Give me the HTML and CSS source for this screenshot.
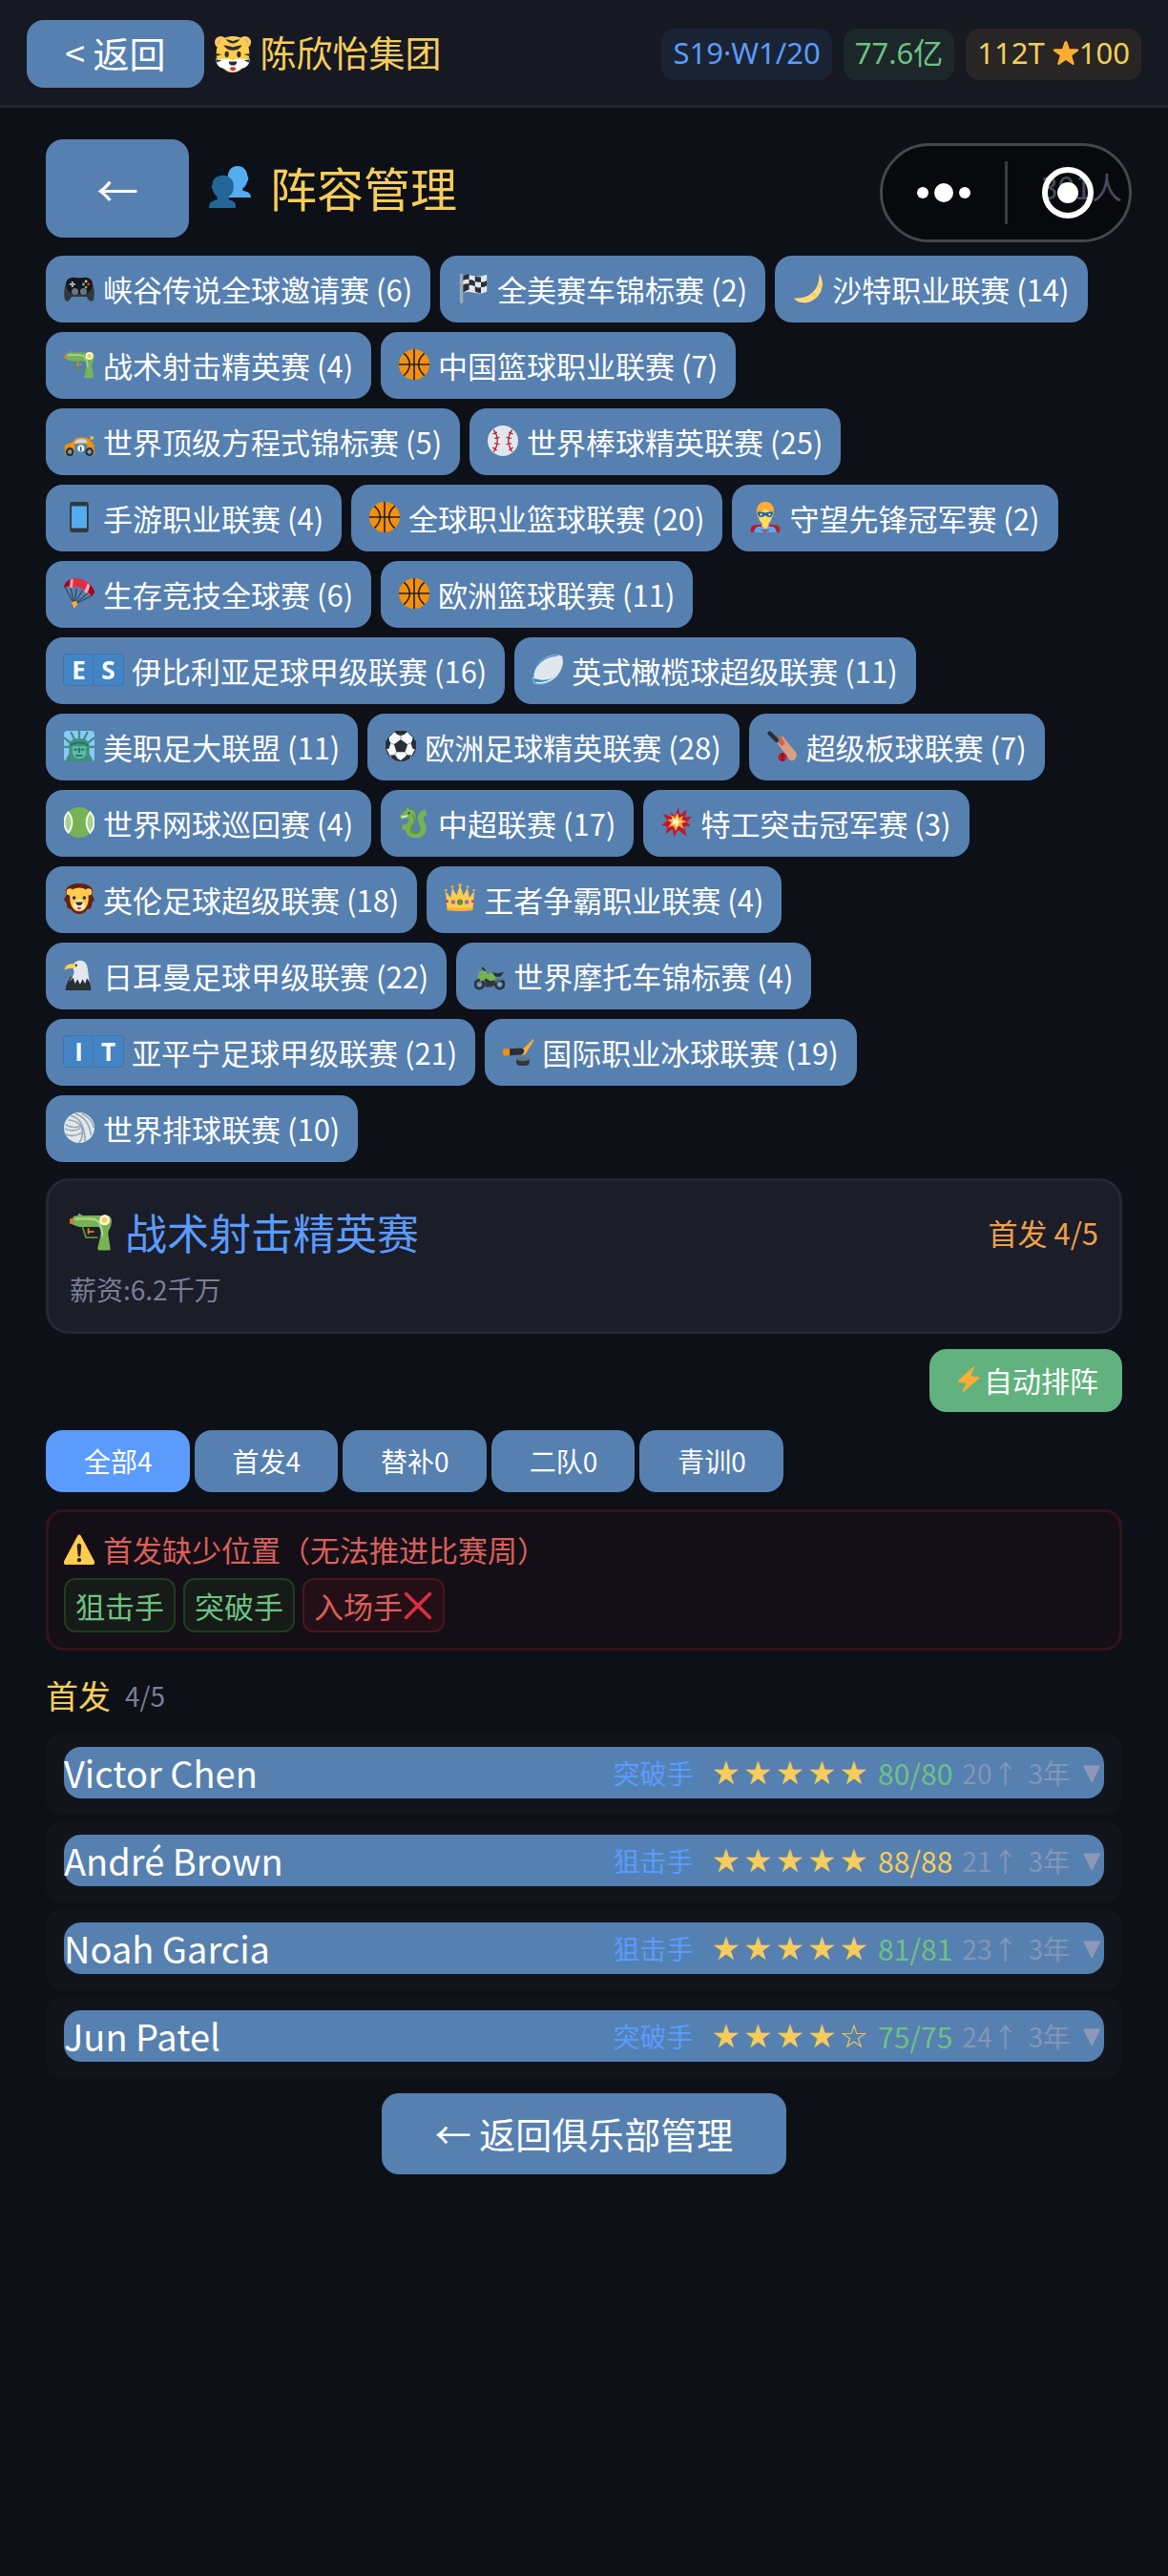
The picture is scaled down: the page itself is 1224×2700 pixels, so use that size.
FILE: index.html
```
<!DOCTYPE html>
<html lang="zh-CN">
<head>
    <meta charset="UTF-8">
    <meta name="viewport" content="width=device-width, initial-scale=1.0">
    <title>阵容管理</title>
    <link rel="stylesheet" href="styles.css">
</head>
<body>
    <svg class="sprite" aria-hidden="true">
        <symbol id="tiger" viewBox="0 0 36 36">
            <circle cx="6" cy="6" r="6" fill="#ffcc4d"/><circle cx="6.5" cy="6.5" r="4" fill="#e6aaaa"/>
            <circle cx="30" cy="6" r="6" fill="#ffcc4d"/><circle cx="29.5" cy="6.5" r="4" fill="#e6aaaa"/>
            <path fill="#ffcc4d" d="M18 0C8 0 2 6 1.500 17c0 3 .5 6 2 8 3 6 8 11 14.500 11S29.500 31 32.500 25c1.500-2 2-5 2-8C34 6 28 0 18 0z"/>
            <path fill="#fff" d="M1 22c4 2 11-1 17 2 6-3 13 0 17-2 0 6-4 10-9 10-3 3-5 3-8 3s-5 0-8-3c-5 0-9-4-9-10z"/>
            <path fill="#292f33" d="M11 3c3 0 5 1 7 2 2-1 4-2 7-2-2 3-5 4-7 4s-5-1-7-4zM9 9c4 0 6 1 9 2 3-1 5-2 9-2-2 4-6 5-9 5s-7-1-9-5zM1 17l6 1-6 2zM35 17l-6 1 6 2zM1 23l6 1-5 2zM35 23l-6 1 5 2zM14 25h8c0 3-2 4-4 4s-4-1-4-4z"/>
            <ellipse cx="12" cy="18" rx="2" ry="3" fill="#292f33"/><ellipse cx="24" cy="18" rx="2" ry="3" fill="#292f33"/>
            <path fill="#dd2e44" d="M15 32c0-2 6-2 6 0 0 3-6 3-6 0z"/>
        </symbol>
        <symbol id="busts" viewBox="0 0 36 36">
            <path fill="#55acee" d="M16 27v-3c0-1 1-2 4-3v-2c-3-2-4-5-4-8 0-7 3-11 8.500-11S33 4 33 9c1 0 1 3 0 4-1 3-2 5-4 6v2c4 1 7 2 7 6H16z"/>
            <path fill="#226699" d="M0 36c0-5 2-6 7-7v-3c-2-1-3-3-4-6-1-1-1-4 0-4 0-5 4-8 9-8 6 0 10 5 9 11 0 3-2 6-4 7v3c5 1 6 2 6 7H0z"/>
        </symbol>
        <symbol id="star" viewBox="0 0 36 36">
            <path fill="#ffac33" d="M18 1c1 0 1 1 2 2l3 9h10c2 0 3 2 1 3l-8 6 3 10c1 2-1 3-2 2l-9-6-9 6c-1 1-3 0-2-2l3-10-8-6c-2-1-1-3 1-3h10l3-9c1-1 1-2 2-2z"/>
        </symbol>
        <symbol id="gamepad" viewBox="0 0 36 36">
            <path fill="#31373d" d="M1 31C-1 24 1 14 4 8h28c3 6 5 16 3 23-1 4-6 3-8-3H9c-2 6-7 7-8 3z"/>
            <path fill="#14171a" d="M3 10c3-5 8-5 12-4h6c4-1 9-1 12 4 1 6-1 13-8 15H11C4 23 2 16 3 10z"/>
            <circle cx="13" cy="22" r="4" fill="#66757f"/><circle cx="23" cy="22" r="4" fill="#66757f"/>
            <path stroke="#99aab5" stroke-width="2.5" d="M10 10v7M6.500 13.500h7"/>
            <circle cx="26" cy="10" r="1.6" fill="#ffcc4d"/><circle cx="29" cy="13.5" r="1.6" fill="#dd2e44"/><circle cx="23" cy="13.5" r="1.6" fill="#55acee"/><circle cx="26" cy="17" r="1.6" fill="#77b255"/>
        </symbol>
        <symbol id="flag" viewBox="0 0 36 36">
            <path fill="#99aab5" d="M2 3c0-3 4-3 4 0v31c0 3-4 3-4 0z"/>
            <path fill="#e1e8ed" d="M6 4c8-5 14 4 28-2v20c-12 6-19-3-28 2z"/>
            <path fill="#292f33" d="M6 4q4-3 7-2v6q-3-1-7 1zM20 4q3 1 7 1v6q-4 0-7-1zM13 8q4 0 7 2v6q-3-2-7-2zM27 11q4 0 7-2v6q-3 2-7 2zM6 14q4-2 7-1v7q-3 0-7 4zM20 16q4 2 7 1v7q-4 0-7-2z"/>
        </symbol>
        <symbol id="moon" viewBox="0 0 36 36">
            <path fill="#ffd983" d="M31 1c7 10 4 24-7 31-8 5-18 4-23-2 11 0 18-2 23-8 5-5 7-12 7-21z"/>
            <circle cx="25" cy="26" r="2.5" fill="#ffcc4d"/><circle cx="32" cy="16" r="1.7" fill="#ffcc4d"/><circle cx="16" cy="31" r="1.5" fill="#ffcc4d"/>
        </symbol>
        <symbol id="pistol" viewBox="0 0 36 36">
            <path fill="none" stroke="#5c913b" stroke-width="1.5" d="M11 14l3 9h10"/>
            <path fill="none" stroke="#f4900c" stroke-width="1.3" d="M16 15v5M16 18h5"/>
            <path fill="#e0702c" d="M0 7l4-1v6l-4-1z"/>
            <path fill="#77b255" d="M3 5l4-1 1-2 3 2h17c5-1 8 1 8 5 0 5-3 7-3 11l2 13c0 1-1 1-2 1h-7c-1 0-2 0-2-2l3-13c0-3-1-5-3-5H8l-5-2z"/>
            <path fill="none" stroke="#a6d388" stroke-width="2" stroke-linecap="round" d="M5 7h12c7 0 10 2 11 14"/>
            <circle cx="30" cy="8" r="4.5" fill="#fff8e8"/><circle cx="30" cy="8" r="2.5" fill="#ffcc4d"/>
        </symbol>
        <symbol id="basketball" viewBox="0 0 36 36">
            <circle cx="18" cy="18" r="18" fill="#f4900c"/>
            <path fill="none" stroke="#231f20" stroke-width="1.8" d="M18 0v36M0 18h36M6 5c9 8 9 18 0 26M30 5c-9 8-9 18 0 26"/>
        </symbol>
        <symbol id="racecar" viewBox="0 0 36 36">
            <path fill="#ffac33" d="M31 12l4 1v3l-4 1z"/>
            <path fill="#f4900c" d="M1 34V24c1-2 6-3 9-4 3-5 5-6 9-6h5c4 0 6 2 8 5 3 1 4 5 4 15z"/>
            <path fill="#bbddf5" d="M12 21c2-4 4-5 8-5h3c2 0 4 2 5 4z"/>
            <path fill="#3b88c3" d="M13 22h14v12H13z"/>
            <circle cx="20" cy="27" r="4" fill="#fff"/><path stroke="#292f33" stroke-width="1.5" d="M20 25v5"/>
            <circle cx="7" cy="31" r="5" fill="#292f33"/><circle cx="30" cy="31" r="5" fill="#292f33"/>
            <circle cx="7" cy="31" r="2.5" fill="#8899a6"/><circle cx="30" cy="31" r="2.5" fill="#8899a6"/>
        </symbol>
        <symbol id="baseball" viewBox="0 0 36 36">
            <circle cx="18" cy="18" r="18" fill="#e1e8ed"/>
            <path fill="none" stroke="#be1931" stroke-width="1.5" d="M7 5c6 8 6 18 0 26M29 5c-6 8-6 18 0 26M6 10l5-2M8 15l6-1M8 21l6 1M6 26l5 3M30 10l-5-2M28 15l-6-1M28 21l-6 1M30 26l-5 3"/>
        </symbol>
        <symbol id="phone" viewBox="0 0 36 36">
            <rect x="7" y="0" width="22" height="36" rx="3" fill="#31373d"/>
            <rect x="9" y="5" width="18" height="26" fill="#55acee"/>
        </symbol>
        <symbol id="hero" viewBox="0 0 36 36">
            <path fill="#be1931" d="M1 36v-4c0-4 3-5 8-5h18c5 0 8 1 8 5v4z"/>
            <path fill="#55acee" d="M5 36c0-5 3-7 8-7h10c5 0 8 2 8 7z"/>
            <path fill="#dd2e44" d="M12 33h12l-6 3z"/>
            <path fill="#ffac33" d="M9 18C6 8 9 0 18 0s12 8 9 18z"/>
            <path fill="#ffdc5d" d="M10 13c4-1 6-3 8-5 3 3 6 4 8 4 0 8-1 11-4 13v4l-4 3-4-3v-4c-3-2-4-5-4-12z"/>
            <path fill="#226699" d="M9 12c3-1 6 0 9 1 3-1 6-2 9-1 0 5-2 6-5 6-2 0-3-2-4-2s-2 2-4 2c-3 0-5-1-5-6z"/>
            <circle cx="13" cy="15" r="1.3" fill="#dff"/><circle cx="23" cy="15" r="1.3" fill="#dff"/>
        </symbol>
        <symbol id="parachute" viewBox="0 0 36 36">
            <path fill="none" stroke="#292f33" stroke-width="1" d="M1 10l11 21M8 12l4 19M15 12l-3 19M22 14L12 31M28 18L12 31M34 20L12 31"/>
            <path fill="#dd2e44" d="M0 11C2 3 8 0 15 0c11 1 20 9 21 17 0 2-1 3-3 4-1-3-3-4-6-3-1-4-3-6-7-5-2-3-5-4-9-2-3-2-7-1-11 0z"/>
            <path fill="#f4abba" d="M8 2l3-1-1 10H7zM28 6l3 3-4 9-3-2z"/><path fill="#a0041e" d="M0 11c1-5 3-8 7-9L6 9zM31 8c3 3 5 6 5 9l-3 4-4-4z"/>
            <path fill="#ffac33" d="M9 28l6-1 1 4-4 5z"/>
        </symbol>
        <symbol id="rugby" viewBox="0 0 36 36">
            <path fill="#e1e8ed" d="M35 2c3 10-2 22-10 28-7 6-19 7-23 4C-2 27 2 14 9 8 17 1 29-2 35 2z"/>
            <path fill="#3b88c3" d="M35 12c-2 12-14 21-30 17-2 0-4-1-4-2 0 9 5 10 15 8 10-3 18-12 19-23z"/>
            <path fill="none" stroke="#e1e8ed" stroke-width="2" d="M4 33c12 3 25-5 29-17"/>
            <path fill="none" stroke="#3b88c3" stroke-width="1.5" d="M1 27C0 13 14 2 30 1"/>
        </symbol>
        <symbol id="liberty" viewBox="0 0 36 36">
            <rect width="36" height="36" rx="4" fill="#88c9f9"/>
            <path stroke="#3f8f7c" stroke-width="2.5" d="M18 0v12M8 1l6 12M28 1l-6 12M0 8l11 9M36 8l-11 9M0 19h9M36 19h-9"/>
            <path fill="#3f8f7c" d="M2 36c1-6 4-7 4-10v-8c0-6 5-9 12-9s12 3 12 9v8c0 3 3 4 4 10z"/>
            <path fill="#5dbba6" d="M10 18h16v8c0 4-4 7-8 7s-8-3-8-7z"/>
            <path fill="none" stroke="#2c6b60" stroke-width="2" d="M8 17c5-4 15-4 20 0M12 22h4M20 22h4M18 20v6M14 29h8"/>
        </symbol>
        <symbol id="soccer" viewBox="0 0 36 36">
            <circle cx="18" cy="18" r="18" fill="#292f33"/>
            <path fill="#f5f8fa" d="M18 3l8-1 6 6-1 8 4 5-5 10-9 1-3 3-5-3-7-1-5-10 4-5-1-8 6-6z"/>
            <path fill="#292f33" d="M18 10l8 6-3 9H13l-3-9zM11 0h14l-2 4-5 2-5-2zM0 12l4-2 2 5-2 6-4 1zM36 12l-4-2-2 5 2 6 4 1zM5 29l6-1 3 4-2 3zM31 29l-6-1-3 4 2 3z"/>
            <path stroke="#8899a6" stroke-width="1" d="M18 5v5M6 14l4 2M30 14l-4 2M13 25l-3 4M23 25l3 4"/>
        </symbol>
        <symbol id="cricket" viewBox="0 0 36 36">
            <path fill="#d99e82" d="M13 11l5-5 16 20c3 4-3 11-7 9L12 15z"/>
            <path fill="#c1694f" d="M10 12l6-6 5 8-3 4z"/>
            <path stroke="#292f33" stroke-width="5" stroke-linecap="round" d="M3 3l8 8"/>
            <circle cx="18" cy="31" r="5" fill="#be1931"/><path stroke="#7c0012" stroke-width="1.2" d="M18 26v10"/>
        </symbol>
        <symbol id="tennis" viewBox="0 0 36 36">
            <circle cx="18" cy="18" r="18" fill="#77b255"/>
            <path fill="#a6d388" stroke="#fff" stroke-width="2" d="M5 6c6 7 6 17 0 24-6-6-6-18 0-24zM31 6c-6 7-6 17 0 24 6-6 6-18 0-24z"/>
        </symbol>
        <symbol id="dragon" viewBox="0 0 36 36">
            <path fill="none" stroke="#77b255" stroke-width="7" stroke-linejoin="round" d="M14 8c6 5-1 11-3 17-1 10 18 11 18 0 0-6-5-9-3-14 1-3 2-4 6-5"/>
            <path fill="#77b255" d="M1 10l7-6 2-4 3 3 5 1 2 8-6 4-4-3-7 2zM3 21l7-1 3 4-8 3z"/>
            <path fill="none" stroke="#5c913b" stroke-width="1.8" d="M16 9c7 7-1 12-2 18 2 6 11 4 11-2M7 4l1-3M14 3l2-3M18 6l4-2M4 22l-3 2"/>
            <path stroke="#fff" stroke-width="1.5" d="M3 12l7-2"/><circle cx="12" cy="7" r="1.2" fill="#292f33"/>
        </symbol>
        <symbol id="boom" viewBox="0 0 36 36">
            <path fill="#be1931" d="M20 0l2 9 8-6-2 9 8-1-6 7 5 4-8 1 3 12-10-8-5 8-2-9-8 6 2-9-7-2 7-5-5-8 9 3 1-5 4 5z"/>
            <path fill="#ffac33" d="M19 7l2 6 5-3-2 5 6 2-6 2 3 7-7-4-3 6-3-6-6 2 4-6-5-3 6-1-2-5 5 3z"/>
            <path fill="#fff3cf" d="M19 11l1 5 4 1-4 2-1 5-3-4-4 1 2-4-1-4 4 2z"/>
        </symbol>
        <symbol id="lion" viewBox="0 0 36 36">
            <path fill="#662113" d="M18 0C9 0 4 3 2 8l1 5-3 6 3 4 1 6 5 2c2 4 6 5 9 5s7-1 9-5l5-2 1-6 3-4-3-6 1-5C32 3 27 0 18 0z"/>
            <circle cx="7" cy="10" r="4" fill="#ffcc4d"/><circle cx="29" cy="10" r="4" fill="#ffcc4d"/>
            <path fill="#ffcc4d" d="M18 5c-8 0-11 4-11 12 0 9 4 16 11 16s11-7 11-16c0-8-3-12-11-12z"/>
            <path fill="#ffe8b6" d="M18 18c3 3 8 5 7 9-2 4-5 5-7 5s-5-1-7-5c-1-4 4-6 7-9z"/>
            <path fill="#292f33" d="M14 22h8c0 3-2 4-4 4s-4-1-4-4z"/><circle cx="12" cy="17" r="2" fill="#292f33"/><circle cx="24" cy="17" r="2" fill="#292f33"/><path fill="#dd2e44" d="M16 28h4v2l-2 1-2-1z"/>
        </symbol>
        <symbol id="crown" viewBox="0 0 36 36">
            <path fill="#ffcc4d" d="M3 31L1 9l6 8 2-12 5 9 4-12 4 12 5-9 2 12 6-8-2 22c-9 2-21 2-30 0z"/>
            <g fill="#ffac33"><circle cx="1.5" cy="8" r="1.5"/><circle cx="9" cy="4" r="1.5"/><circle cx="18" cy="2" r="2"/><circle cx="27" cy="4" r="1.5"/><circle cx="34.5" cy="8" r="1.5"/><path d="M3 29h30v3H3z"/></g>
            <circle cx="18" cy="22" r="3.5" fill="#5c913b"/><circle cx="10" cy="22" r="2.5" fill="#9266cc"/><circle cx="26" cy="22" r="2.5" fill="#9266cc"/><circle cx="3" cy="21" r="1.5" fill="#dd2e44"/><circle cx="33" cy="21" r="1.5" fill="#dd2e44"/>
        </symbol>
        <symbol id="eagle" viewBox="0 0 36 36">
            <path fill="#292f33" d="M2 36c0-7 3-11 6-16h18c4 5 6 10 6 16z"/>
            <path fill="#e1e8ed" d="M10 7c3-6 10-8 15-4 4 4 3 12 5 22l-3-3-2 6-3-5-3 6-3-6-3 5-2-7-5 5c3-5 6-8 6-12z"/>
            <path fill="#ffcc4d" d="M13 5C6 4 1 6 1 12c3-2 6-2 9-2 3 1 5-1 5-4z"/><circle cx="14.5" cy="6.5" r="1.3" fill="#292f33"/>
        </symbol>
        <symbol id="motorcycle" viewBox="0 0 36 36">
            <g fill="none" stroke="#292f33" stroke-width="3"><circle cx="6" cy="29" r="5"/><circle cx="30" cy="29" r="5"/></g>
            <circle cx="6" cy="29" r="2" fill="#99aab5"/><circle cx="30" cy="29" r="2" fill="#99aab5"/>
            <path stroke="#66757f" stroke-width="2" d="M6 29l6-16M15 29l20-7"/>
            <path fill="#31373d" d="M12 20h11l2 9-5 3h-7z"/>
            <path fill="#77b255" d="M6 14l6-2 4 5 5-2 6 4-3 5-5 1-5-3-5 3-5-4z"/><path fill="#292f33" d="M21 15l7 1 7-2-4 6h-6z"/><path stroke="#292f33" stroke-width="2" d="M9 9l4 4"/>
        </symbol>
        <symbol id="hockey" viewBox="0 0 36 36">
            <path fill="#ffac33" d="M36 3c1 0 1 2 0 3l-8 13c-1 2-3 3-6 3l-2-6c2 0 4-1 5-2z"/>
            <path fill="#292f33" d="M7 15l14-1 4 2c0 3-1 6-5 6L7 23z"/>
            <path fill="#f4900c" d="M2 15h6v8H2c-3-1-3-7 0-8z"/>
            <path fill="#31373d" d="M16 27v5c0 4 15 4 15 0v-5z"/><ellipse cx="23.5" cy="27" rx="7.5" ry="2.5" fill="#66757f"/>
        </symbol>
        <symbol id="volleyball" viewBox="0 0 36 36">
            <circle cx="18" cy="18" r="18" fill="#e1e8ed"/>
            <path fill="none" stroke="#99a5b0" stroke-width="1.8" d="M13 1c9 3 17 10 19 26M8 4c9 2 16 8 17 30M5 9c6 0 12 3 15 7M1 19c6 3 12 3 18 0M2 26c8 3 14 1 19-2M20 16c-7 3-15 1-18-2M20 16c3 7 2 14-2 20M21 1c8 4 13 10 14 17"/>
        </symbol>
        <symbol id="bolt" viewBox="-3 0 42 36">
            <path fill="#ffac33" d="M26 1c1-2-1-1-2 0L4 19c-1 1-1 3 1 3l10 1L9 35c0 1 1 1 2 0l21-18c1-1 1-3-1-3l-10-1z"/>
        </symbol>
        <symbol id="warning" viewBox="0 0 36 36">
            <path fill="#ffcc4d" d="M2 36c-2 0-3-2-2-4L16 2c1-2 3-2 4 0l16 30c1 2 0 4-2 4z"/>
            <path fill="#231f20" d="M15.500 14c0-4 5-4 5 0l-1 11c0 2-3 2-3 0z"/><circle cx="18" cy="30.5" r="2.5" fill="#231f20"/>
        </symbol>
        <symbol id="cross" viewBox="0 0 36 36">
            <path stroke="#dd2e44" stroke-width="4" stroke-linecap="round" d="M4 4l28 28M32 4L4 32"/>
        </symbol>
    </svg>

    <header class="topbar">
        <div class="brand">
            <button class="btn btn-back">&lt; 返回</button>
            <svg class="emoji emoji-lg"><use href="#tiger"/></svg>
            <span class="company">陈欣怡集团</span>
        </div>
        <div class="stats">
            <span class="stat blue">S19·W1/20</span>
            <span class="stat green">77.6亿</span>
            <span class="stat gold">112T <svg class="emoji emoji-sm"><use href="#star"/></svg>100</span>
        </div>
    </header>

    <div class="capsule">
        <button class="capsule-btn" aria-label="更多">
            <svg width="60" height="24" viewBox="0 0 60 24"><g fill="#fff"><circle cx="8" cy="12" r="6"/><circle cx="30" cy="12" r="10"/><circle cx="52" cy="12" r="6"/></g></svg>
        </button>
        <button class="capsule-btn" aria-label="关闭">
            <svg width="56" height="56" viewBox="0 0 56 56"><circle cx="28" cy="28" r="24" fill="none" stroke="#fff" stroke-width="6"/><circle cx="28" cy="28" r="11" fill="#fff"/></svg>
        </button>
    </div>

    <main class="page">
        <div class="page-head">
            <button class="btn btn-arrow">←</button>
            <h1><svg class="emoji emoji-xl"><use href="#busts"/></svg>阵容管理</h1>
            <span class="total">301人</span>
        </div>

        <div class="leagues">
            <button class="btn chip"><svg class="emoji"><use href="#gamepad"/></svg>峡谷传说全球邀请赛 (6)</button>
            <button class="btn chip"><svg class="emoji"><use href="#flag"/></svg>全美赛车锦标赛 (2)</button>
            <button class="btn chip"><svg class="emoji"><use href="#moon"/></svg>沙特职业联赛 (14)</button>
            <button class="btn chip"><svg class="emoji"><use href="#pistol"/></svg>战术射击精英赛 (4)</button>
            <button class="btn chip"><svg class="emoji"><use href="#basketball"/></svg>中国篮球职业联赛 (7)</button>
            <button class="btn chip"><svg class="emoji"><use href="#racecar"/></svg>世界顶级方程式锦标赛 (5)</button>
            <button class="btn chip"><svg class="emoji"><use href="#baseball"/></svg>世界棒球精英联赛 (25)</button>
            <button class="btn chip"><svg class="emoji"><use href="#phone"/></svg>手游职业联赛 (4)</button>
            <button class="btn chip"><svg class="emoji"><use href="#basketball"/></svg>全球职业篮球联赛 (20)</button>
            <button class="btn chip"><svg class="emoji"><use href="#hero"/></svg>守望先锋冠军赛 (2)</button>
            <button class="btn chip"><svg class="emoji"><use href="#parachute"/></svg>生存竞技全球赛 (6)</button>
            <button class="btn chip"><svg class="emoji"><use href="#basketball"/></svg>欧洲篮球联赛 (11)</button>
            <button class="btn chip"><span class="region"><b>E</b><b>S</b></span>伊比利亚足球甲级联赛 (16)</button>
            <button class="btn chip"><svg class="emoji"><use href="#rugby"/></svg>英式橄榄球超级联赛 (11)</button>
            <button class="btn chip"><svg class="emoji"><use href="#liberty"/></svg>美职足大联盟 (11)</button>
            <button class="btn chip"><svg class="emoji"><use href="#soccer"/></svg>欧洲足球精英联赛 (28)</button>
            <button class="btn chip"><svg class="emoji"><use href="#cricket"/></svg>超级板球联赛 (7)</button>
            <button class="btn chip"><svg class="emoji"><use href="#tennis"/></svg>世界网球巡回赛 (4)</button>
            <button class="btn chip"><svg class="emoji"><use href="#dragon"/></svg>中超联赛 (17)</button>
            <button class="btn chip"><svg class="emoji"><use href="#boom"/></svg>特工突击冠军赛 (3)</button>
            <button class="btn chip"><svg class="emoji"><use href="#lion"/></svg>英伦足球超级联赛 (18)</button>
            <button class="btn chip"><svg class="emoji"><use href="#crown"/></svg>王者争霸职业联赛 (4)</button>
            <button class="btn chip"><svg class="emoji"><use href="#eagle"/></svg>日耳曼足球甲级联赛 (22)</button>
            <button class="btn chip"><svg class="emoji"><use href="#motorcycle"/></svg>世界摩托车锦标赛 (4)</button>
            <button class="btn chip"><span class="region"><b>I</b><b>T</b></span>亚平宁足球甲级联赛 (21)</button>
            <button class="btn chip"><svg class="emoji"><use href="#hockey"/></svg>国际职业冰球联赛 (19)</button>
            <button class="btn chip"><svg class="emoji"><use href="#volleyball"/></svg>世界排球联赛 (10)</button>
        </div>

        <section class="card">
            <div class="card-head">
                <h2><svg class="emoji emoji-xl"><use href="#pistol"/></svg>战术射击精英赛</h2>
                <span class="lineup">首发 4/5</span>
            </div>
            <p class="salary">薪资:6.2千万</p>
        </section>

        <div class="actions">
            <button class="btn btn-auto"><svg class="emoji"><use href="#bolt"/></svg>自动排阵</button>
        </div>

        <div class="tabs">
            <button class="btn tab active">全部4</button>
            <button class="btn tab">首发4</button>
            <button class="btn tab">替补0</button>
            <button class="btn tab">二队0</button>
            <button class="btn tab">青训0</button>
        </div>

        <section class="alert">
            <p class="alert-title"><svg class="emoji"><use href="#warning"/></svg>首发缺少位置（无法推进比赛周）</p>
            <div class="slots">
                <span class="slot ok">狙击手</span>
                <span class="slot ok">突破手</span>
                <span class="slot missing">入场手<svg class="emoji"><use href="#cross"/></svg></span>
            </div>
        </section>

        <h3 class="group">首发 <small>4/5</small></h3>

        <div class="players">
            <div class="player">
                <button class="btn player-btn">
                    <span class="name">Victor Chen</span>
                    <span class="pos">突破手</span>
                    <span class="stars"><i>★</i><i>★</i><i>★</i><i>★</i><i>★</i></span>
                    <span class="rating">80/80</span>
                    <span class="meta">20↑</span>
                    <span class="meta">3年</span>
                    <span class="caret">▼</span>
                </button>
            </div>
            <div class="player">
                <button class="btn player-btn">
                    <span class="name">André Brown</span>
                    <span class="pos">狙击手</span>
                    <span class="stars"><i>★</i><i>★</i><i>★</i><i>★</i><i>★</i></span>
                    <span class="rating top">88/88</span>
                    <span class="meta">21↑</span>
                    <span class="meta">3年</span>
                    <span class="caret">▼</span>
                </button>
            </div>
            <div class="player">
                <button class="btn player-btn">
                    <span class="name">Noah Garcia</span>
                    <span class="pos">狙击手</span>
                    <span class="stars"><i>★</i><i>★</i><i>★</i><i>★</i><i>★</i></span>
                    <span class="rating">81/81</span>
                    <span class="meta">23↑</span>
                    <span class="meta">3年</span>
                    <span class="caret">▼</span>
                </button>
            </div>
            <div class="player">
                <button class="btn player-btn">
                    <span class="name">Jun Patel</span>
                    <span class="pos">突破手</span>
                    <span class="stars"><i>★</i><i>★</i><i>★</i><i>★</i><i>☆</i></span>
                    <span class="rating">75/75</span>
                    <span class="meta">24↑</span>
                    <span class="meta">3年</span>
                    <span class="caret">▼</span>
                </button>
            </div>
        </div>

        <div class="footer">
            <button class="btn btn-club">← 返回俱乐部管理</button>
        </div>
    </main>
</body>
</html>
```
FILE: styles.css
```
* {
    box-sizing: border-box;
}
body {
    margin: 0;
    min-height: 100vh;
    background: #0d1017;
    color: #fff;
    font-family: "Noto Sans CJK SC", sans-serif;
    font-size: 31px;
}
h1, h2, h3, p {
    margin: 0;
    font-weight: 400;
}
.sprite {
    position: absolute;
    width: 0;
    height: 0;
}
.emoji {
    width: 32px;
    height: 32px;
    flex-shrink: 0;
}
.emoji-sm {
    width: 28px;
}
.emoji-lg {
    width: 38px;
    height: 38px;
}
.emoji-xl {
    width: 44px;
    height: 44px;
}
.btn {
    display: flex;
    align-items: center;
    justify-content: center;
    margin: 0;
    padding: 0;
    border: none;
    border-radius: 18px;
    background: #5680b0;
    color: #fff;
    font-family: inherit;
    font-size: 31px;
    line-height: 1;
    white-space: nowrap;
    cursor: pointer;
}

/* top bar */
.topbar {
    display: flex;
    align-items: center;
    justify-content: space-between;
    padding: 21px 28px 18px;
    background: #161822;
    border-bottom: 3px solid #222535;
}
.brand {
    display: flex;
    align-items: center;
}
.btn-back {
    height: 71px;
    padding: 0 40px 4px;
    margin-right: 11px;
    font-size: 38px;
}
.company {
    margin-left: 10px;
    padding-bottom: 6px;
    color: #f5cd5b;
    font-size: 38px;
    line-height: 1;
}
.stats {
    display: flex;
    gap: 12px;
}
.stat {
    display: flex;
    align-items: center;
    height: 54px;
    padding: 0 12px 2px;
    border-radius: 14px;
    font-family: "Noto Sans", "Noto Sans CJK SC", sans-serif;
    font-size: 31px;
    line-height: 1;
    white-space: pre;
}
.blue {
    color: #5a9bfc;
    background: #192334;
}
.green {
    color: #6dc283;
    background: #1c2729;
}
.gold {
    color: #f5cd5b;
    background: #272624;
}

/* mini program capsule, floats over the page */
.capsule {
    position: absolute;
    top: 150px;
    right: 38px;
    display: flex;
    align-items: center;
    width: 264px;
    height: 104px;
    border: 3px solid #464749;
    border-radius: 52px;
    background: rgba(0, 0, 0, 0.4);
}
.capsule-btn {
    display: flex;
    flex: 1;
    align-items: center;
    justify-content: center;
    height: 66px;
    padding: 0;
    border: none;
    background: none;
}
.capsule-btn + .capsule-btn {
    border-left: 3px solid #3a3b3e;
}

.page {
    padding: 33px 48px 48px;
}
.page-head {
    display: flex;
    align-items: center;
    margin-bottom: 19px;
}
.btn-arrow {
    width: 150px;
    height: 103px;
    font-size: 44px;
}
h1 {
    display: flex;
    align-items: center;
    gap: 20px;
    margin-left: 21px;
    padding-bottom: 4px;
    color: #f5cd5b;
    font-size: 49px;
    line-height: 1;
}
.total {
    margin-left: auto;
    padding-bottom: 6px;
    color: #7b7e96;
    font-size: 32px;
    line-height: 1;
}

/* league filter */
.leagues {
    display: flex;
    flex-wrap: wrap;
    gap: 10px;
    margin-bottom: 17px;
}
.chip {
    gap: 9px;
    height: 70px;
    padding: 0 19px 2px;
}
.region {
    display: flex;
}
.region b {
    width: 31px;
    height: 32px;
    border-radius: 3px;
    background: #4384c4;
    box-shadow: 0 0 0 1px #3f74ad;
    font-family: "Open Sans", sans-serif;
    font-size: 26px;
    line-height: 32px;
    text-align: center;
}

/* league card */
.card {
    padding: 31px 22px 28px;
    border: 3px solid #252736;
    border-radius: 24px;
    background: #1b1d29;
}
.card-head {
    display: flex;
    align-items: center;
    justify-content: space-between;
}
h2 {
    display: flex;
    align-items: center;
    gap: 14px;
    padding-bottom: 4px;
    color: #5a9bfc;
    font-size: 44px;
    line-height: 44px;
}
.lineup {
    padding-bottom: 4px;
    color: #f0a04b;
    font-size: 31px;
    line-height: 1;
}
.salary {
    margin-top: 18px;
    color: #7b7e96;
    font-size: 28px;
    line-height: 32px;
}
.actions {
    display: flex;
    justify-content: flex-end;
    margin: 16px 0 19px;
}
.btn-auto {
    height: 66px;
    padding: 0 25px 2px;
    background: #61b27e;
    font-size: 30px;
}

.tabs {
    display: flex;
    gap: 5px;
    margin-bottom: 18px;
}
.tab {
    height: 65px;
    padding: 0 39px 2px 40px;
    font-size: 28px;
}
.tab.active {
    background: #5a9bfc;
}

/* missing positions */
.alert {
    padding: 23px 16px 16px;
    border: 3px solid #32121a;
    border-radius: 18px;
    background: #140f16;
}
.alert-title {
    display: flex;
    align-items: center;
    gap: 9px;
    margin-bottom: 14px;
    color: #db5f5b;
    line-height: 32px;
}
.slots {
    display: flex;
    gap: 8px;
}
.slot {
    display: flex;
    align-items: center;
    height: 57px;
    padding: 0 10px;
    border: 2px solid;
    border-radius: 12px;
    line-height: 1;
}
.ok {
    color: #6dc283;
    border-color: #1f3d20;
    background: #161b17;
}
.missing {
    color: #db5f5b;
    border-color: #4a161c;
    background: #240f17;
}

.group {
    display: flex;
    align-items: center;
    gap: 15px;
    margin: 29px 0 22px;
    color: #f5cd5b;
    font-size: 34px;
    line-height: 36px;
}
.group small {
    color: #7b7e96;
    font-size: 28px;
}

/* players */
.players {
    display: flex;
    flex-direction: column;
    gap: 8px;
}
.player {
    padding: 14px 19px 16px;
    border-radius: 16px;
    background: #11151b;
}
.player-btn {
    gap: 10px;
    width: 100%;
    height: 54px;
    font-size: 28px;
}
.name {
    margin-right: auto;
    font-size: 38px;
}
.pos {
    padding: 7px 9px;
    border-radius: 6px;
    background: #5481b4;
    color: #5a9bfc;
}
.stars {
    display: flex;
    gap: 3px;
    color: #f5cd5b;
    font-family: "DejaVu Sans", sans-serif;
    font-size: 34px;
}
.stars i {
    font-style: normal;
}
.rating {
    color: #6dc283;
    font-size: 30px;
}
.rating.top {
    color: #f5cd5b;
}
.meta {
    color: #8595b5;
}
.caret {
    width: 26px;
    color: #8e99b8;
    font-family: "DejaVu Sans", sans-serif;
    font-size: 24px;
    text-align: center;
}

.footer {
    display: flex;
    justify-content: center;
    margin-top: 17px;
}
.btn-club {
    height: 85px;
    padding: 0 56px 2px;
    font-size: 38px;
}
```
